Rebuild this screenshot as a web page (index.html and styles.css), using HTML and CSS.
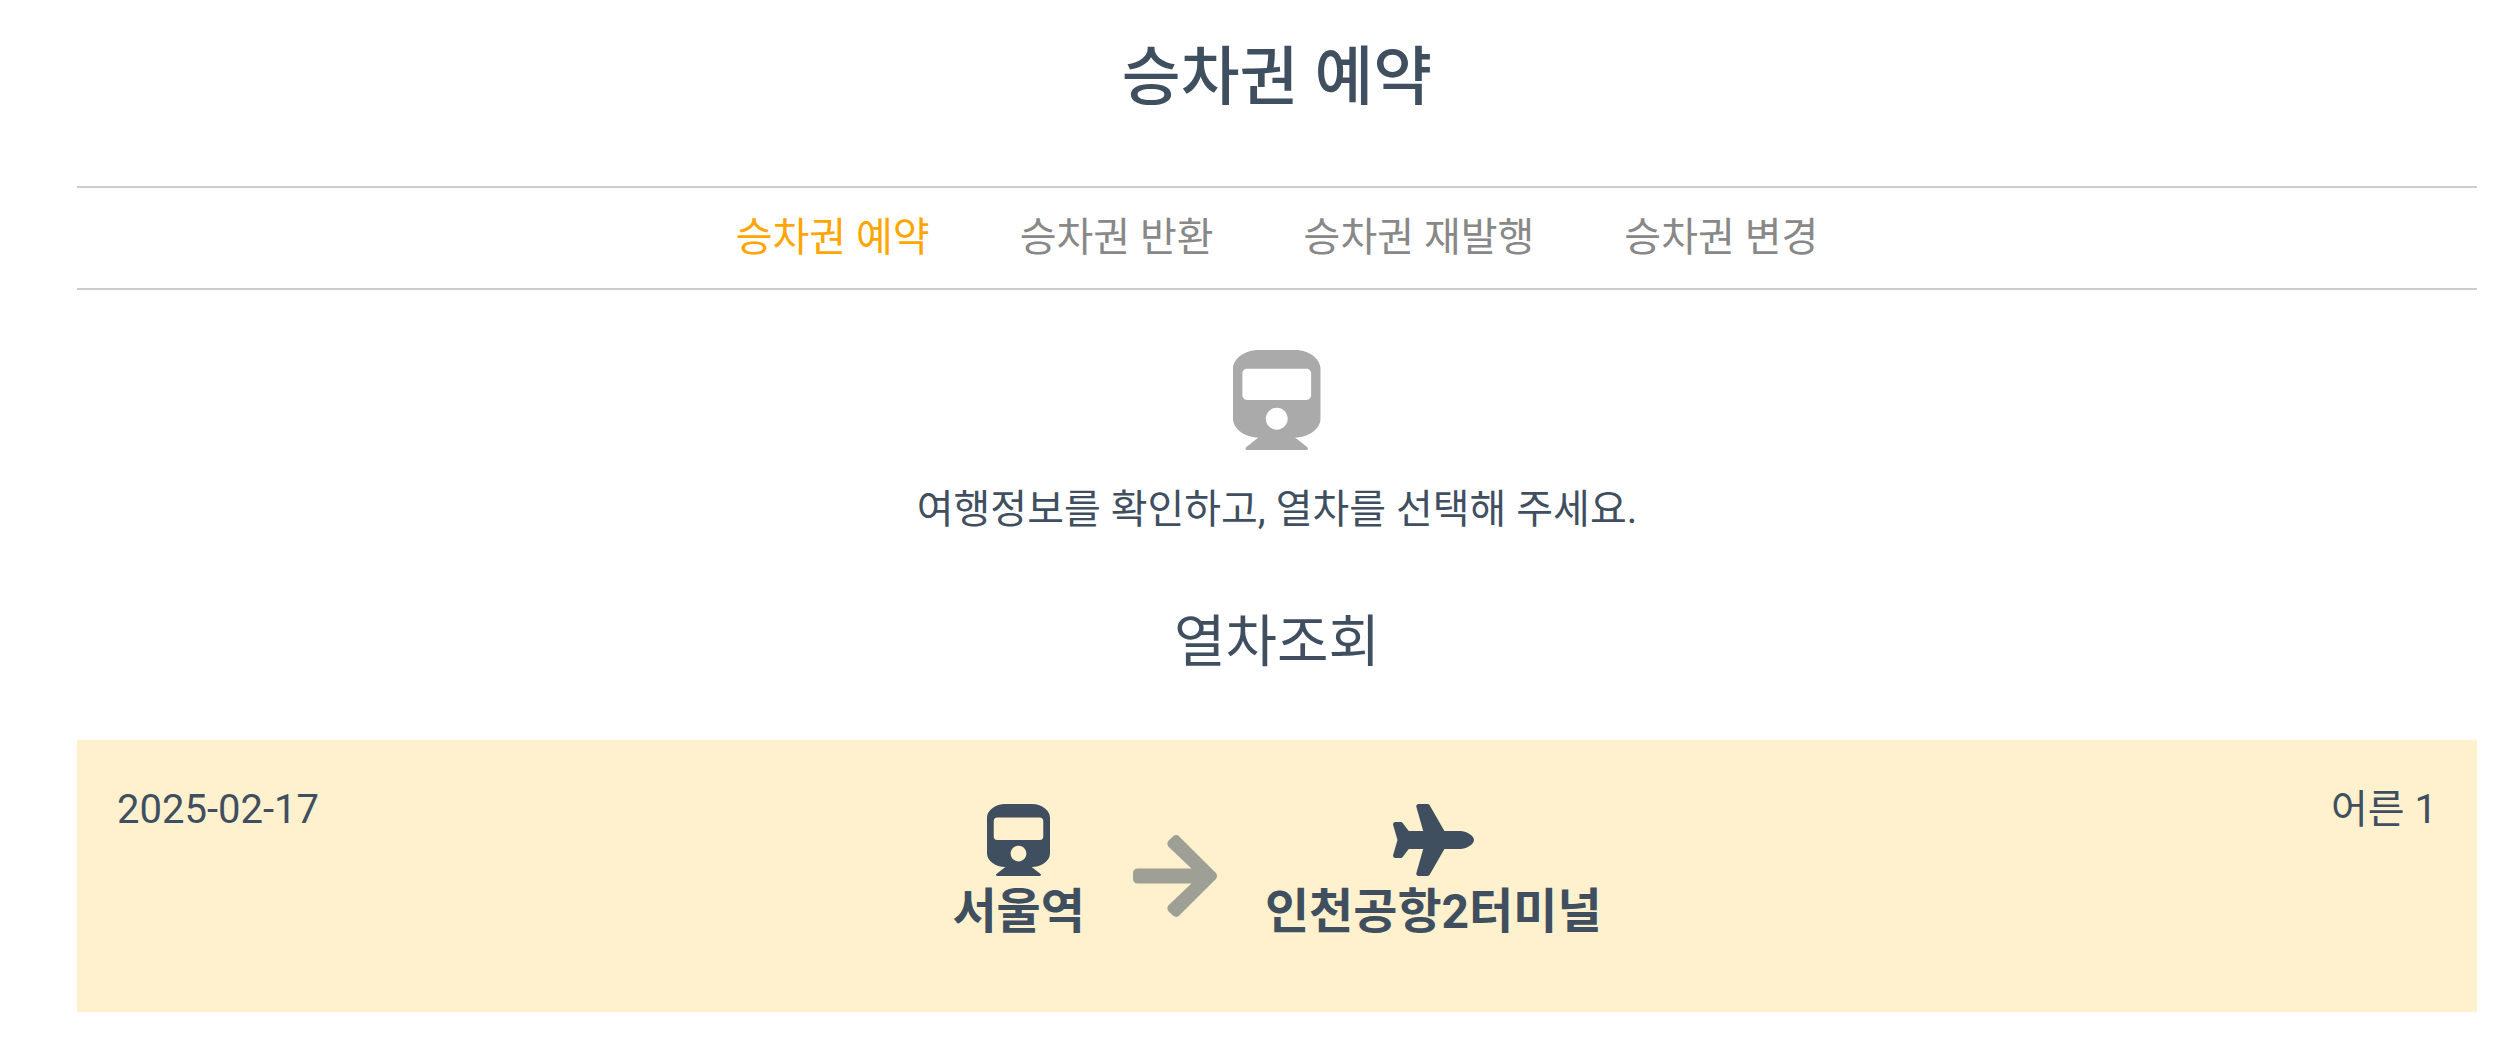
FILE: index.html
```
<!DOCTYPE html>
<html lang="ko">
<head>
  <meta charset="UTF-8" />
  <meta name="viewport" content="width=device-width, initial-scale=1" />
  <title>승차권 예약</title>
  <link rel="stylesheet" href="styles.css">
</head>
<body>
  <div class="container">
    <h1>승차권 예약</h1>

    <nav class="tabs">
      <a href="#" class="active">승차권 예약</a>
      <a href="#">승차권 반환</a>
      <a href="#">승차권 재발행</a>
      <a href="#">승차권 변경</a>
    </nav>

    <div class="guide">
      <svg class="guide-icon" viewBox="0 0 448 512" aria-hidden="true"><path d="M448 96v256c0 51.815-61.624 96-130.022 96l62.98 49.721C386.905 502.417 383.562 512 376 512H72c-7.578 0-10.892-9.594-4.957-14.279L130.022 448C61.82 448 0 403.954 0 352V96C0 42.981 64 0 128 0h192c65 0 128 42.981 128 96zm-48 136V120c0-13.255-10.745-24-24-24H72c-13.255 0-24 10.745-24 24v112c0 13.255 10.745 24 24 24h304c13.255 0 24-10.745 24-24zm-176 64c-30.928 0-56 25.072-56 56s25.072 56 56 56 56-25.072 56-56-25.072-56-56-56z"/></svg>
      <p>여행정보를 확인하고, 열차를 선택해 주세요.</p>
    </div>

    <h2>열차조회</h2>

    <div class="trip">
      <div class="date">2025-02-17</div>
      <div class="route">
        <div class="station">
          <svg class="station-icon" viewBox="0 0 448 512" aria-hidden="true"><path d="M448 96v256c0 51.815-61.624 96-130.022 96l62.98 49.721C386.905 502.417 383.562 512 376 512H72c-7.578 0-10.892-9.594-4.957-14.279L130.022 448C61.82 448 0 403.954 0 352V96C0 42.981 64 0 128 0h192c65 0 128 42.981 128 96zm-48 136V120c0-13.255-10.745-24-24-24H72c-13.255 0-24 10.745-24 24v112c0 13.255 10.745 24 24 24h304c13.255 0 24-10.745 24-24zm-176 64c-30.928 0-56 25.072-56 56s25.072 56 56 56 56-25.072 56-56-25.072-56-56-56z"/></svg>
          <strong>서울역</strong>
        </div>
        <svg class="arrow" viewBox="0 0 448 512" aria-hidden="true"><path d="M190.5 66.9l22.2-22.2c9.4-9.4 24.6-9.4 33.9 0L441 239c9.4 9.4 9.4 24.6 0 33.9L246.6 467.3c-9.4 9.4-24.6 9.4-33.9 0l-22.2-22.2c-9.5-9.5-9.3-25 .4-34.3L311.4 296H24c-13.3 0-24-10.7-24-24v-32c0-13.3 10.7-24 24-24h287.4L190.9 101.2c-9.8-9.3-10-24.8-.4-34.3z"/></svg>
        <div class="station">
          <svg class="station-icon" viewBox="0 0 576 512" aria-hidden="true"><path d="M480 192H365.71L260.61 8.06A16.014 16.014 0 0 0 246.71 0h-65.5c-10.63 0-18.3 10.17-15.38 20.39L214.86 192H112l-43.2-57.6c-3.02-4.03-7.77-6.4-12.8-6.4H16.01C5.6 128-2.04 137.78.49 147.88L32 256 .49 364.12C-2.04 374.22 5.6 384 16.01 384H56c5.04 0 9.78-2.37 12.8-6.4L112 320h102.86l-49.03 171.6c-2.92 10.22 4.75 20.4 15.38 20.4h65.5c5.74 0 11.04-3.08 13.89-8.06L365.71 320H480c35.35 0 96-28.65 96-64s-60.65-64-96-64z"/></svg>
          <strong>인천공항2터미널</strong>
        </div>
      </div>
      <div class="people">어른 1</div>
    </div>
  </div>
</body>
</html>
```
FILE: styles.css
```
* { box-sizing: border-box; }
body { margin: 0; font-family: Roboto, "Noto Sans CJK KR", sans-serif; font-size: 40px; line-height: 60px; color: #404f5f; background: #fff; text-align: center; }
svg { display: block; fill: currentColor; }
.container { padding: 30px 37px 52px 77px; }
h1 { margin: 0 0 60px; font-size: 64px; font-weight: 500; line-height: 96px; }
.tabs { display: flex; justify-content: center; gap: 90px; padding: 20px 0; border-top: 2px solid #ccc; border-bottom: 2px solid #ccc; }
.tabs a { color: #888; text-decoration: none; }
.tabs a.active { color: orange; }
.guide { padding-top: 60px; }
.guide-icon { height: 100px; margin: 0 auto 30px; color: #aaa; }
.guide p { margin: 0; }
h2 { margin: 60px 0 56px; font-size: 56px; font-weight: 400; line-height: 84px; }
.trip { display: grid; grid-template-columns: 1fr auto 1fr; padding: 40px 40px 64px; background: #fff1cd; }
.date { text-align: left; }
.people { text-align: right; }
.route { display: flex; align-items: center; gap: 48px; padding-top: 24px; }
.station-icon { height: 72px; margin: 0 auto; }
.station strong { display: block; font-size: 48px; font-weight: 700; line-height: 72px; }
.arrow { height: 96px; opacity: 0.5; }
```
